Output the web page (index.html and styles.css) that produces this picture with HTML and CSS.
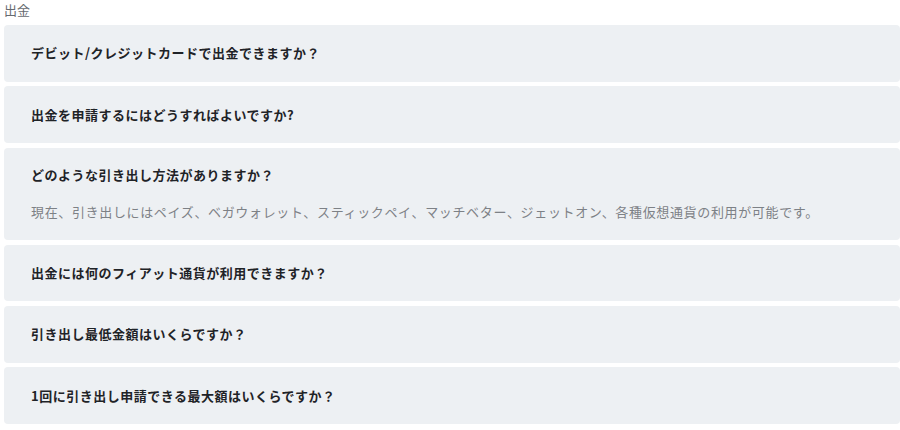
FILE: index.html
```html
<!DOCTYPE html>
<html lang="ja">
<head>
<meta charset="utf-8">
<link rel="stylesheet" href="styles.css">
</head>
<body>
<section class="faq">
  <div class="faq-title">出金</div>
  <div class="faq-list">
    <div class="faq-item"><div class="q">デビット/クレジットカードで出金できますか？</div></div>
    <div class="faq-item"><div class="q">出金を申請するにはどうすればよいですか?</div></div>
    <div class="faq-item open">
      <div class="q">どのような引き出し方法がありますか？</div>
      <div class="a">現在、引き出しにはペイズ、ベガウォレット、スティックペイ、マッチベター、ジェットオン、各種仮想通貨の利用が可能です。</div>
    </div>
    <div class="faq-item"><div class="q">出金には何のフィアット通貨が利用できますか？</div></div>
    <div class="faq-item"><div class="q">引き出し最低金額はいくらですか？</div></div>
    <div class="faq-item"><div class="q">1回に引き出し申請できる最大額はいくらですか？</div></div>
  </div>
</section>
</body>
</html>
```

FILE: styles.css
```css
html, body {
  margin: 0;
  padding: 0;
  background: #ffffff;
}
body {
  font-family: "Noto Sans CJK JP", "Noto Sans", sans-serif;
}
.faq {
  padding: 0 0 0 4px;
}
.faq-title {
  font-size: 13px;
  line-height: 20px;
  color: #666a70;
  margin-bottom: 5px;
}
.faq-list {
  display: flex;
  flex-direction: column;
  gap: 4.8px;
}
.faq-item {
  background: #edf0f3;
  border-radius: 4px;
  height: 56.6px;
  box-sizing: border-box;
  padding: 0 27px;
  display: flex;
  flex-direction: column;
  justify-content: center;
}
.faq-item.open {
  height: 92px;
  justify-content: flex-start;
  padding-top: 17px;
}
.q {
  font-size: 13px;
  font-weight: 700;
  color: #1f2327;
  line-height: 20px;
  letter-spacing: 0.5px;
}
.a {
  margin-top: 17px;
  font-size: 13px;
  color: #7d8186;
  line-height: 20px;
  letter-spacing: 0.65px;
}
```
